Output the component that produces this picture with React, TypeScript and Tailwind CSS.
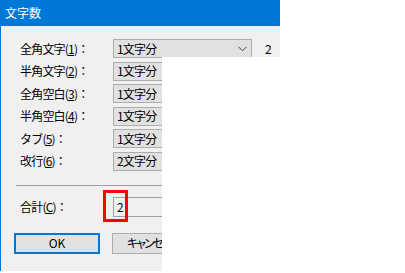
import React from "react";

const rows = [
  { pre: "全角文字(", key: "1", post: ")：", value: "1文字分" },
  { pre: "半角文字(", key: "2", post: ")：", value: "1文字分" },
  { pre: "全角空白(", key: "3", post: ")：", value: "1文字分" },
  { pre: "半角空白(", key: "4", post: ")：", value: "1文字分" },
  { pre: "タブ(", key: "5", post: ")：", value: "1文字分" },
  { pre: "改行(", key: "6", post: ")：", value: "2文字分" },
];

export default function App() {
  return (
    <div className="relative w-[405px] h-[273px] bg-white overflow-hidden font-[family-name:'Noto_Sans_CJK_JP',sans-serif] text-[12px] text-black">
      <div className="w-[280px] h-[271px] bg-[#f0f0f0] border-l border-[#0078d7] flex flex-col">
        <div className="h-[26px] -ml-px bg-[#0078d7] text-white flex items-center pl-[5px] shrink-0 leading-none">
          文字数
        </div>
        <div className="flex flex-col gap-[3.5px] pt-[13px] tracking-[-0.8px]">
          {rows.map((r, i) => (
            <div key={i} className="flex items-center h-[19px]">
              <div className="w-[112px] pl-[19px] leading-none whitespace-nowrap">
                {r.pre}
                <span className="underline underline-offset-1">{r.key}</span>
                {r.post}
              </div>
              <div className="w-[139px] h-[19px] bg-[#e1e1e1] border border-[#adadad] flex items-center justify-between pl-[3px] pr-[4px] leading-none">
                <span>{r.value}</span>
                <svg width="9" height="6" viewBox="0 0 9 6">
                  <path d="M0.5 0.8 L4.5 4.8 L8.5 0.8" fill="none" stroke="#444" strokeWidth="1" />
                </svg>
              </div>
              {i === 0 && <div className="ml-[13px] leading-none">2</div>}
            </div>
          ))}
        </div>
        <div className="mt-[14px] mx-[15px] h-px bg-[#a0a0a0]" />
        <div className="flex items-center mt-[11px] h-[20px] tracking-[-0.8px]">
          <div className="w-[112px] pl-[19px] leading-none whitespace-nowrap">
            合計(<span className="underline underline-offset-1">C</span>)：
          </div>
          <div className="w-[150px] h-[20px] bg-[#f0f0f0] border border-[#a0a0a0] flex items-center pl-[3px] leading-none">
            2
          </div>
        </div>
        <div className="flex mt-[16px] pl-[13px] gap-[12px]">
          <div className="w-[86px] h-[21px] bg-[#e1e1e1] border-2 border-[#0078d7] flex items-center justify-center leading-none">
            OK
          </div>
          <div className="w-[86px] h-[21px] bg-[#e1e1e1] border border-[#adadad] flex items-center justify-start pl-[14px] leading-none whitespace-nowrap overflow-hidden tracking-[-2px] [font-feature-settings:'palt']">
            キャンセル
          </div>
        </div>
      </div>
      <div className="absolute left-[162px] top-[57px] right-0 bottom-0 bg-white" />
      <div className="absolute left-[103px] top-[190px] w-[25px] h-[32px] border-[3px] border-[#ff0000]" />
    </div>
  );
}
